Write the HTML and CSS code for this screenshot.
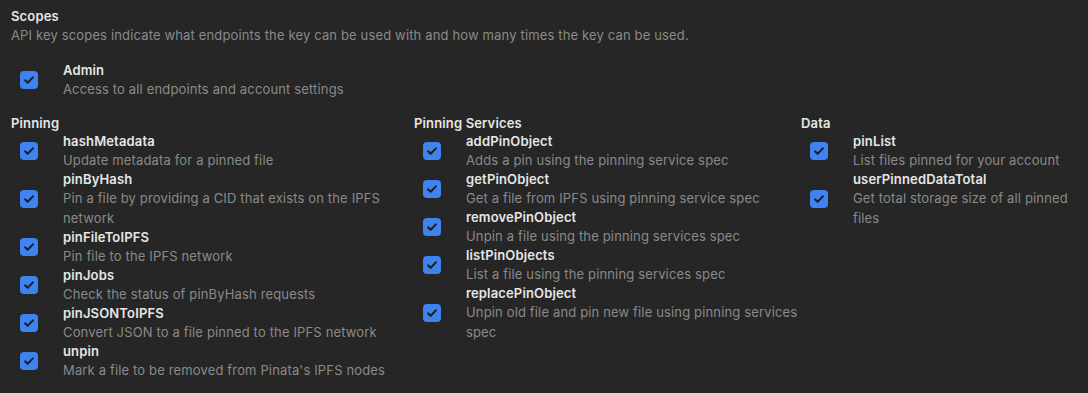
FILE: index.html
```html
<!DOCTYPE html>
<html lang="en">
<head>
  <meta charset="UTF-8">
  <title>Scopes</title>
  <link rel="stylesheet" href="styles.css">
</head>
<body>
  <div class="scopes">
    <div class="scopes-title">Scopes</div>
    <div class="scopes-desc">API key scopes indicate what endpoints the key can be used with and how many times the key can be used.</div>

    <div class="item admin">
      <div class="check"><span class="box"><svg viewBox="0 0 16 16"><path d="M4.5 8.3l2.3 2.2 4.7-4.8"/></svg></span></div>
      <div class="text">
        <div class="name">Admin</div>
        <div class="desc">Access to all endpoints and account settings</div>
      </div>
    </div>

    <div class="groups">
      <div class="group">
        <div class="group-title">Pinning</div>
        <div class="item">
          <div class="check"><span class="box"><svg viewBox="0 0 16 16"><path d="M4.5 8.3l2.3 2.2 4.7-4.8"/></svg></span></div>
          <div class="text"><div class="name">hashMetadata</div><div class="desc">Update metadata for a pinned file</div></div>
        </div>
        <div class="item">
          <div class="check"><span class="box"><svg viewBox="0 0 16 16"><path d="M4.5 8.3l2.3 2.2 4.7-4.8"/></svg></span></div>
          <div class="text"><div class="name">pinByHash</div><div class="desc">Pin a file by providing a CID that exists on the IPFS network</div></div>
        </div>
        <div class="item">
          <div class="check"><span class="box"><svg viewBox="0 0 16 16"><path d="M4.5 8.3l2.3 2.2 4.7-4.8"/></svg></span></div>
          <div class="text"><div class="name">pinFileToIPFS</div><div class="desc">Pin file to the IPFS network</div></div>
        </div>
        <div class="item">
          <div class="check"><span class="box"><svg viewBox="0 0 16 16"><path d="M4.5 8.3l2.3 2.2 4.7-4.8"/></svg></span></div>
          <div class="text"><div class="name">pinJobs</div><div class="desc">Check the status of pinByHash requests</div></div>
        </div>
        <div class="item">
          <div class="check"><span class="box"><svg viewBox="0 0 16 16"><path d="M4.5 8.3l2.3 2.2 4.7-4.8"/></svg></span></div>
          <div class="text"><div class="name">pinJSONToIPFS</div><div class="desc">Convert JSON to a file pinned to the IPFS network</div></div>
        </div>
        <div class="item">
          <div class="check"><span class="box"><svg viewBox="0 0 16 16"><path d="M4.5 8.3l2.3 2.2 4.7-4.8"/></svg></span></div>
          <div class="text"><div class="name">unpin</div><div class="desc">Mark a file to be removed from Pinata's IPFS nodes</div></div>
        </div>
      </div>

      <div class="group">
        <div class="group-title">Pinning Services</div>
        <div class="item">
          <div class="check"><span class="box"><svg viewBox="0 0 16 16"><path d="M4.5 8.3l2.3 2.2 4.7-4.8"/></svg></span></div>
          <div class="text"><div class="name">addPinObject</div><div class="desc">Adds a pin using the pinning service spec</div></div>
        </div>
        <div class="item">
          <div class="check"><span class="box"><svg viewBox="0 0 16 16"><path d="M4.5 8.3l2.3 2.2 4.7-4.8"/></svg></span></div>
          <div class="text"><div class="name">getPinObject</div><div class="desc">Get a file from IPFS using pinning service spec</div></div>
        </div>
        <div class="item">
          <div class="check"><span class="box"><svg viewBox="0 0 16 16"><path d="M4.5 8.3l2.3 2.2 4.7-4.8"/></svg></span></div>
          <div class="text"><div class="name">removePinObject</div><div class="desc">Unpin a file using the pinning services spec</div></div>
        </div>
        <div class="item">
          <div class="check"><span class="box"><svg viewBox="0 0 16 16"><path d="M4.5 8.3l2.3 2.2 4.7-4.8"/></svg></span></div>
          <div class="text"><div class="name">listPinObjects</div><div class="desc">List a file using the pinning services spec</div></div>
        </div>
        <div class="item">
          <div class="check"><span class="box"><svg viewBox="0 0 16 16"><path d="M4.5 8.3l2.3 2.2 4.7-4.8"/></svg></span></div>
          <div class="text"><div class="name">replacePinObject</div><div class="desc">Unpin old file and pin new file using pinning services spec</div></div>
        </div>
      </div>

      <div class="group">
        <div class="group-title">Data</div>
        <div class="item">
          <div class="check"><span class="box"><svg viewBox="0 0 16 16"><path d="M4.5 8.3l2.3 2.2 4.7-4.8"/></svg></span></div>
          <div class="text"><div class="name">pinList</div><div class="desc">List files pinned for your account</div></div>
        </div>
        <div class="item">
          <div class="check"><span class="box"><svg viewBox="0 0 16 16"><path d="M4.5 8.3l2.3 2.2 4.7-4.8"/></svg></span></div>
          <div class="text"><div class="name">userPinnedDataTotal</div><div class="desc">Get total storage size of all pinned files</div></div>
        </div>
      </div>
    </div>
  </div>
</body>
</html>
```

FILE: styles.css
```css
body {
  margin: 0;
  background-color: #262626;
  font-family: Inter, "Noto Sans", sans-serif;
  font-size: 13px;
  letter-spacing: 0.15px;
  color: #8a8a8a;
}
.scopes {
  padding: 7px 11px;
}
.scopes-title,
.group-title,
.name {
  color: #e6e6e6;
  font-weight: 600;
  line-height: 18px;
}
.scopes-desc,
.desc {
  line-height: 20px;
}
.admin {
  margin-top: 16px;
}
.groups {
  display: grid;
  grid-template-columns: 403px 387px 1fr;
  margin-top: 15px;
}
.item {
  display: flex;
  align-items: center;
}
.check {
  flex: 0 0 52px;
  display: flex;
}
.box {
  width: 18px;
  height: 18px;
  margin-left: 9px;
  border-radius: 4px;
  background-color: #3f83f0;
  display: flex;
}
.box svg {
  width: 18px;
  height: 18px;
  fill: none;
  stroke: #1e1e1e;
  stroke-width: 1.8;
  stroke-linecap: round;
  stroke-linejoin: round;
}
.text {
  flex: 1;
}
```
